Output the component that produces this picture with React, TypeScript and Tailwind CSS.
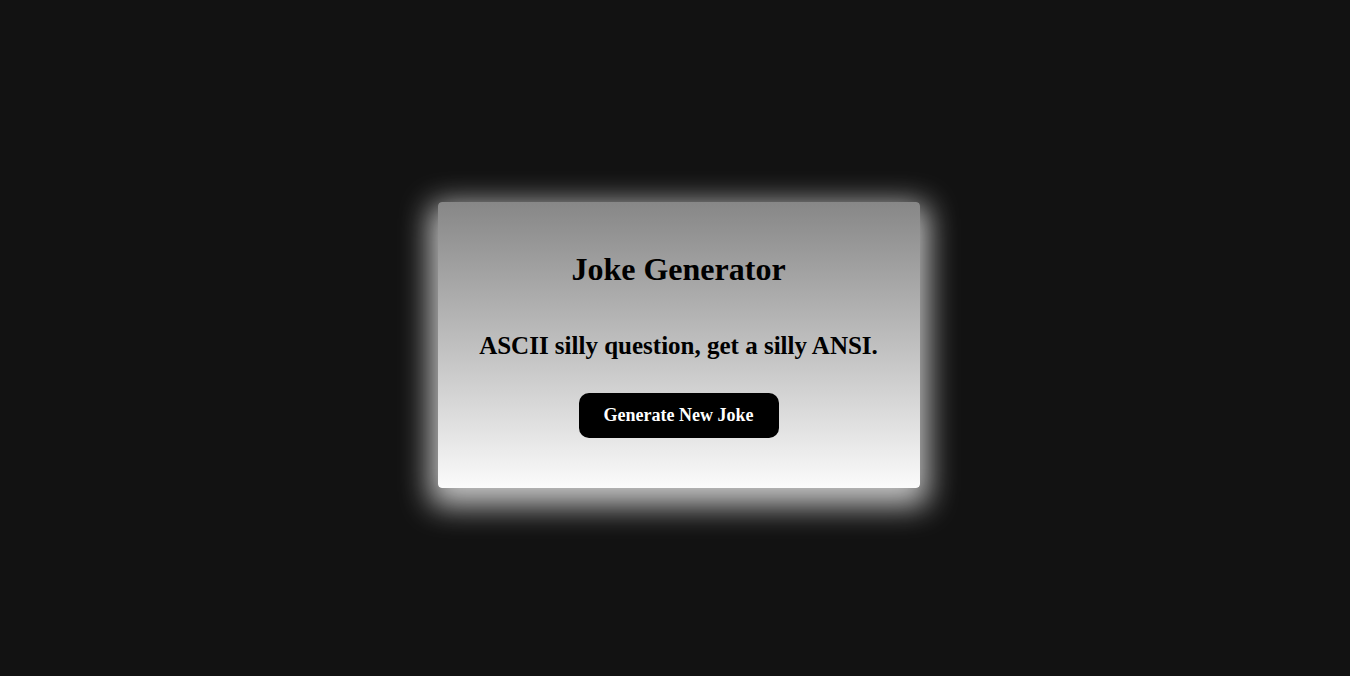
const App = () => {
  return (
    <div className="min-h-screen w-full bg-[#121212] flex items-center justify-center pt-[14px] pl-[7px]">
      <div
        className="w-[482px] rounded-[4px] bg-gradient-to-b from-[#878787] to-[#fbfbfb] shadow-[0_10px_30px_8px_rgba(255,255,255,0.75)] flex flex-col items-center pt-[49px] pb-[50px]"
        style={{ fontFamily: '"Liberation Serif", "Times New Roman", serif' }}
      >
        <h1 className="text-[32px] leading-[37px] font-bold text-black mb-[43px]">
          Joke Generator
        </h1>
        <p className="text-[25px] leading-[29px] font-bold text-black mb-[33px]">
          ASCII silly question, get a silly ANSI.
        </p>
        <button className="w-[200px] h-[45px] rounded-[10px] bg-black text-white text-[18px] font-bold">
          Generate New Joke
        </button>
      </div>
    </div>
  );
};

export default App;
